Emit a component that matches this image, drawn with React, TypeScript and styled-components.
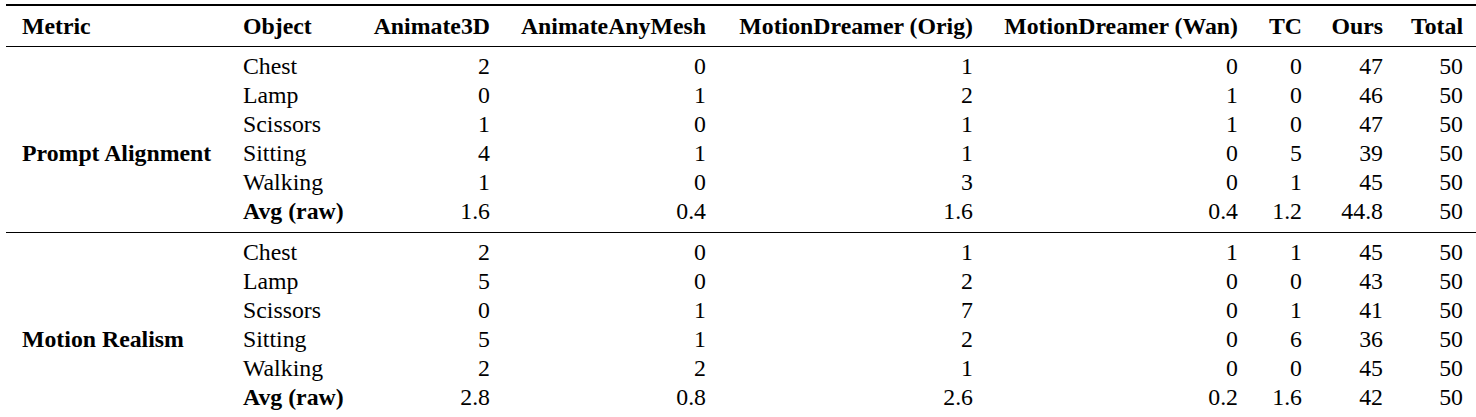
import React from "react";
import styled, { createGlobalStyle } from "styled-components";

const GlobalStyle = createGlobalStyle`
  html, body {
    margin: 0;
    background: #fff;
    overflow: hidden;
  }
  body {
    font-family: "Liberation Serif", "Times New Roman", serif;
    color: #000;
  }
`;

// column widths measured from the reference, left to right
const COLS = "222px 130px 147px 216px 267px 265px 64px 81px 80px";

const Page = styled.div`
  padding: 4px 0 0 6px;
`;

const Table = styled.div`
  width: 1472px;
  border-top: 2px solid #000;
`;

const Head = styled.div`
  display: grid;
  grid-template-columns: ${COLS};
  padding: 6px 0 5px;
  border-bottom: 1px solid #000;
`;

const Block = styled.div<{ $divider?: boolean }>`
  padding: 5px 0 ${(p) => (p.$divider ? "6px" : "0")};
  border-bottom: ${(p) => (p.$divider ? "1px solid #000" : "none")};
`;

const Row = styled.div`
  display: grid;
  grid-template-columns: ${COLS};
  height: 29px;
  align-items: center;
`;

const Cell = styled.div<{ $num?: boolean; $bold?: boolean }>`
  font-size: 23.8px;
  line-height: 29px;
  white-space: nowrap;
  font-weight: ${(p) => (p.$bold ? 700 : 400)};
  text-align: ${(p) => (p.$num ? "right" : "left")};
  padding: ${(p) => (p.$num ? "0 15px 0 0" : "0 0 0 15px")};
  &:first-child {
    padding-left: 16px;
  }
`;

const headers = [
  "Metric",
  "Object",
  "Animate3D",
  "AnimateAnyMesh",
  "MotionDreamer (Orig)",
  "MotionDreamer (Wan)",
  "TC",
  "Ours",
  "Total",
];

type Line = [string, ...(string | number)[]];

const sections: { metric: string; rows: Line[] }[] = [
  {
    metric: "Prompt Alignment",
    rows: [
      ["Chest", 2, 0, 1, 0, 0, 47, 50],
      ["Lamp", 0, 1, 2, 1, 0, 46, 50],
      ["Scissors", 1, 0, 1, 1, 0, 47, 50],
      ["Sitting", 4, 1, 1, 0, 5, 39, 50],
      ["Walking", 1, 0, 3, 0, 1, 45, 50],
      ["Avg (raw)", "1.6", "0.4", "1.6", "0.4", "1.2", "44.8", 50],
    ],
  },
  {
    metric: "Motion Realism",
    rows: [
      ["Chest", 2, 0, 1, 1, 1, 45, 50],
      ["Lamp", 5, 0, 2, 0, 0, 43, 50],
      ["Scissors", 0, 1, 7, 0, 1, 41, 50],
      ["Sitting", 5, 1, 2, 0, 6, 36, 50],
      ["Walking", 2, 2, 1, 0, 0, 45, 50],
      ["Avg (raw)", "2.8", "0.8", "2.6", "0.2", "1.6", 42, 50],
    ],
  },
];

export default function App() {
  return (
    <Page>
      <GlobalStyle />
      <Table>
        <Head>
          {headers.map((h, i) => (
            <Cell key={h} $bold $num={i > 1}>
              {h}
            </Cell>
          ))}
        </Head>
        {sections.map((s, si) => (
          <Block key={s.metric} $divider={si < sections.length - 1}>
            {s.rows.map(([obj, ...vals], ri) => (
              <Row key={obj}>
                <Cell $bold>{ri === 3 ? s.metric : ""}</Cell>
                <Cell $bold={obj.startsWith("Avg")}>{obj}</Cell>
                {vals.map((v, vi) => (
                  <Cell key={vi} $num>
                    {v}
                  </Cell>
                ))}
              </Row>
            ))}
          </Block>
        ))}
      </Table>
    </Page>
  );
}
